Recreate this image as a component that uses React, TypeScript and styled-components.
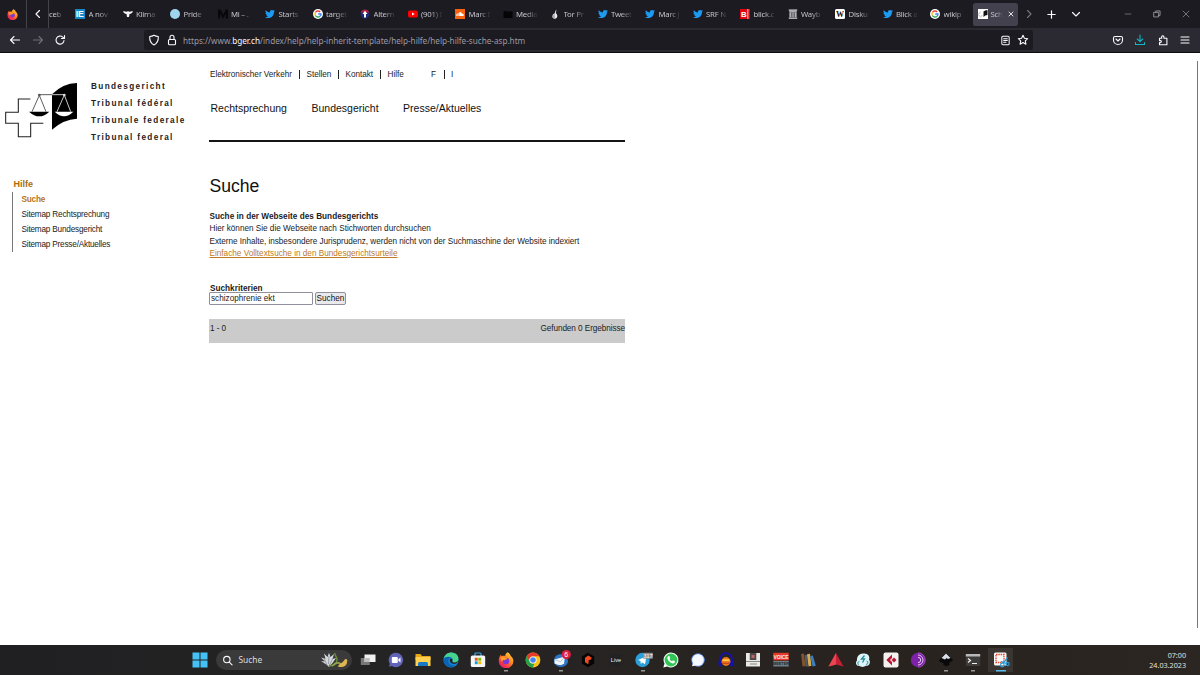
import React from "react";
import styled, { createGlobalStyle, css } from "styled-components";
import { FaTwitter } from "react-icons/fa";

const GlobalStyle = createGlobalStyle`
  * { box-sizing: border-box; }
  body { margin: 0; background: #fff; overflow: hidden; }
`;

const ui = `"Noto Sans", "Open Sans", sans-serif`;
const arial = `"Liberation Sans", Arial, sans-serif`;

const Screen = styled.div`
  width: 1200px;
  height: 675px;
  display: flex;
  flex-direction: column;
  font-family: ${arial};
  background: #fff;
`;

/* ---------- browser chrome ---------- */

const TabBar = styled.div`
  height: 28px;
  flex: none;
  display: flex;
  align-items: center;
  background: #1c1b22;
  color: #fbfbfe;
`;

const BarCell = styled.div<{ $w: number; $line?: boolean }>`
  width: ${(p) => p.$w}px;
  height: 28px;
  flex: none;
  display: flex;
  align-items: center;
  justify-content: center;
  border-right: ${(p) => (p.$line ? "1px solid #44434c" : "none")};
`;

const Tab = styled.div<{ $active?: boolean; $partial?: boolean }>`
  width: ${(p) => (p.$partial ? 20 : p.$active ? 45 : 47.5)}px;
  height: ${(p) => (p.$active ? 23 : 28)}px;
  flex: none;
  display: flex;
  align-items: center;
  gap: ${(p) => (p.$active ? 3 : 3.5)}px;
  padding-left: ${(p) => (p.$partial ? 0 : p.$active ? 5 : 6)}px;
  ${(p) =>
    p.$active &&
    css`
      margin: 0 1.5px 0 1px;
      border-radius: 2.5px;
      background: #42414d;
    `}
`;

const TabTitle = styled.span<{ $w?: number }>`
  width: ${(p) => p.$w ?? 24}px;
  flex: none;
  overflow: hidden;
  white-space: nowrap;
  font: 7.8px/12px ${ui};
  letter-spacing: -.25px;
  color: #c4c3ca;
  mask-image: linear-gradient(to right, #000 40%, transparent 92%);
`;

const NavBar = styled.div`
  height: 25px;
  flex: none;
  display: flex;
  align-items: center;
  background: #2b2a33;
  border-bottom: 1px solid #0c0c0d;
  color: #fbfbfe;
`;

const NavButtons = styled.div`
  width: 144px;
  display: flex;
  align-items: center;
  gap: 10.5px;
  padding-left: 9px;
`;

const UrlBox = styled.div`
  width: 889px;
  height: 20px;
  display: flex;
  align-items: center;
  padding: 0 4px;
  border-radius: 2.5px;
  background: #1c1b22;
`;

const UrlText = styled.div`
  flex: 1;
  padding: 1px 0 0 5.500px;
  white-space: nowrap;
  font: 8.2px/14px ${ui};
  letter-spacing: -.02px;
  color: #9b9aa2;
  b { font-weight: 400; color: #fbfbfe; }
`;

const UrlIcons = styled.div<{ $gap: number }>`
  display: flex;
  align-items: center;
  gap: ${(p) => p.$gap}px;
`;

const Tools = styled.div`
  flex: 1;
  display: flex;
  align-items: center;
  justify-content: flex-end;
  gap: 10.5px;
  padding-right: 9px;
`;

/* ---------- web page ---------- */

const Page = styled.div`
  flex: 1;
  display: flex;
  background: #fff;
  color: #1c1c1c;
`;

const Side = styled.aside`
  width: 209px;
  flex: none;
`;

const Brand = styled.div`
  height: 117px;
  display: flex;
  padding: 25px 0 0 4px;
`;

const LogoBox = styled.div`
  padding-top: 4px;
`;

const CourtNames = styled.div`
  padding-left: 13px;
  font: bold 8.2px/17px ${arial};
  letter-spacing: 1.36px;
  white-space: nowrap;
  color: #222;
`;

const SideTitle = styled.div`
  padding: 7px 0 0 13.5px;
  font: bold 9px/14px ${arial};
  color: #ad6a0e;
`;

const SideList = styled.ul`
  margin: 1px 0 0 12px;
  padding: 0 0 0 8.5px;
  list-style: none;
  border-left: 1px solid #777;
`;

const SideItem = styled.li<{ $current?: boolean }>`
  font: ${(p) => (p.$current ? "bold" : "normal")} 8.2px/15px ${arial};
  letter-spacing: -.19px;
  color: ${(p) => (p.$current ? "#b8741a" : "#222")};
  white-space: nowrap;
`;

const Content = styled.main`
  width: 416px;
  flex: none;
`;

const MetaNav = styled.nav`
  display: flex;
  align-items: center;
  height: 26px;
  padding: 17px 0 0 1px;
  white-space: nowrap;
`;

const MetaLink = styled.span<{ $w: number; $line?: boolean }>`
  width: ${(p) => p.$w}px;
  height: 9px;
  flex: none;
  font: 8.2px/10px ${arial};
  letter-spacing: -.02px;
  border-right: ${(p) => (p.$line ? "1px solid #222" : "none")};
`;

const MetaGap = styled.span`
  width: 6.5px;
  flex: none;
`;

const MainNav = styled.nav`
  display: flex;
  gap: 24.5px;
  height: 63px;
  padding: 21px 0 0 1.5px;
  font: 10.5px/16px ${arial};
  white-space: nowrap;
  color: #111;
  border-bottom: 2px solid #151515;
`;

const Title = styled.h1`
  margin: 32px 0 0 .5px;
  font: 17.6px/24px ${arial};
  color: #111;
`;

const Text = styled.div`
  margin-top: 12.500px;
  padding-left: .5px;
  font: 8.2px/12.5px ${arial};
  white-space: nowrap;
`;

const Line = styled.div<{ $track?: number }>`
  letter-spacing: ${(p) => p.$track ?? 0}px;
`;

const Link = styled.a`
  color: #c07a22;
  text-decoration: underline;
`;

const Label = styled.label`
  display: block;
  margin-top: 24.500px;
  padding-left: 1px;
  font: bold 8.2px/7px ${arial};
  letter-spacing: .02px;
`;

const FormRow = styled.div`
  display: flex;
  gap: 2px;
  height: 13px;
`;

const Input = styled.div`
  width: 104px;
  padding-left: 1px;
  border: 1px solid #8f8f9d;
  border-radius: 1px;
  font: 8.2px/11px ${arial};
`;

const Button = styled.button`
  width: 31px;
  padding: 0;
  border: 1px solid #8f8f9d;
  border-radius: 2px;
  background: #e9e9ed;
  color: #111;
  font: 8.2px/10px ${arial};
`;

const Result = styled.div`
  display: flex;
  justify-content: space-between;
  height: 24px;
  margin-top: 14px;
  padding: 4px 0 0 1px;
  background: #cbcbcb;
  font: 8.2px/12px ${arial};
  letter-spacing: -.07px;
`;

const Scroll = styled.div`
  width: 1px;
  height: 567px;
  margin: 8px 2px 0 auto;
  background: #777;
`;

/* ---------- taskbar ---------- */

const Taskbar = styled.footer`
  height: 30px;
  flex: none;
  display: flex;
  align-items: center;
  padding-left: 186px;
  background: linear-gradient(to right, #202022, #252424 35%, #29231f 75%, #2b2622);
  color: #e6e6e6;
`;

const AppCell = styled.div<{ $running?: boolean; $active?: boolean }>`
  width: 27.5px;
  height: 30px;
  flex: none;
  display: flex;
  justify-content: center;
  padding-top: 7px;
  background:
    ${(p) =>
      p.$active
        ? "linear-gradient(#55bce8, #55bce8) 50% 25px / 10px 1.5px no-repeat, linear-gradient(#3a3531, #3a3531) 50% 3px / 25px 24px no-repeat"
        : p.$running
        ? "linear-gradient(#9a9896, #9a9896) 50% 25px / 4px 1.5px no-repeat"
        : "none"};
`;

const SearchPill = styled.div`
  width: 136px;
  height: 20px;
  flex: none;
  display: flex;
  align-items: center;
  margin: 0 2.5px;
  padding: 0 3px 0 6px;
  border-radius: 10px;
  background: #3a3a3b;
  font: 8.4px/14px ${ui};
  svg { flex: none; }
`;

const SearchText = styled.span`
  flex: 1;
  padding-left: 5.500px;
  color: #dcdcdc;
`;

const Clock = styled.div`
  margin-left: auto;
  padding-right: 14px;
  text-align: right;
  font: 7.2px/10px ${ui};
  color: #e3e1df;
`;

/* ---------- icons ---------- */

const Stroke = ({ d, s = 12, c = "#fbfbfe", w = 1.1, children }: { d?: string; s?: number; c?: string; w?: number; children?: React.ReactNode }) => (
  <svg width={s} height={s} viewBox="0 0 12 12" fill="none" stroke={c} strokeWidth={w} strokeLinecap="round" strokeLinejoin="round">
    {d && <path d={d} />}
    {children}
  </svg>
);

const Firefox = ({ s }: { s: number }) => (
  <svg width={s} height={s} viewBox="0 0 16 16">
    <defs>
      <linearGradient id="fx" x1="1" y1="0" x2="0.2" y2="1">
        <stop offset="0" stopColor="#ffe14a" />
        <stop offset=".45" stopColor="#ff8a1f" />
        <stop offset=".8" stopColor="#f5304c" />
        <stop offset="1" stopColor="#d5228a" />
      </linearGradient>
    </defs>
    <path d="M9.6.3c2.4 1.3 2.6 2.7 3.2 3.6.9.5 2.6 2.5 2.6 5A7.3 7.3 0 0 1 .7 9C.6 6.300 1.600 4.200 3 2.600c0 .8.3 1.400.6 1.700C5 3.600 6.300 3.800 7.200 4 7.200 2.500 8 1.100 9.600.3Z" fill="url(#fx)" />
    <circle cx="8" cy="9" r="3.3" fill="#7a3ad8" />
    <path d="M2.600 5.200c2-.7 3.600-.4 4.700.8 1.500-.1 2 .3 2 .8-.8.7-2.200.6-2.500 1.500C5.200 7.400 4 8 4.700 9.800 3 9 2.200 7 2.600 5.200Z" fill="#ff9a26" />
  </svg>
);

const Google = () => (
  <>
    <circle cx="5" cy="5" r="5" fill="#fff" />
    <g fill="none" strokeWidth="1.400">
      <path d="M7.200 3A3 3 0 0 0 2.400 3.500" stroke="#ea4335" />
      <path d="M2.400 3.500a3 3 0 0 0 0 3" stroke="#fbbc05" />
      <path d="M2.400 6.500A3 3 0 0 0 7 7.200" stroke="#34a853" />
      <path d="M7 7.200A3 3 0 0 0 8 5H5.200" stroke="#4285f4" />
    </g>
  </>
);

const GlyphText = ({ x, y, size, fill, children, family = "Liberation Sans", weight = "bold" }: any) => (
  <text x={x} y={y} fontSize={size} fill={fill} textAnchor="middle" fontFamily={family} fontWeight={weight}>{children}</text>
);

const favicons: Record<string, React.ReactNode> = {
  ie: (<><rect width="10" height="10" fill="#1688ca" /><GlyphText x={4.800} y={8.300} size={8.800} fill="#fff">IE</GlyphText></>),
  klima: <path d="M0 2.500c1.500-.5 2.500 0 3.500.5L4 2l1 .7L6 2l.5 1c1-.5 2-1 3.500-.5C9.300 3.800 8 4.800 6.500 5L6 8H4l-.5-3C2 4.800.7 3.800 0 2.500Z" fill="#f4f4f4" />,
  pride: <circle cx="5" cy="5" r="5" fill="#9fd4ee" />,
  medium: <path d="M0 .5h2.600L5.200 6 7.800.5H10v9H7.600v-5L5.300 9.500H4.700L2 4.500v5H0Z" fill="#08080a" />,
  google: <Google />,
  altern: (<><circle cx="5" cy="5" r="4.500" fill="#1b2a78" /><path d="M.8 3.500A4.500 4.500 0 0 1 9.200 3.500Z" fill="#b21f3c" /><path d="M5 1.800 7.500 5H6v3.500H4V5H2.500Z" fill="#fff" /></>),
  youtube: (<><rect y="1.500" width="10" height="7" rx="1.800" fill="#f00" /><path d="M4 3.400 6.700 5 4 6.600Z" fill="#fff" /></>),
  sound: (<><rect width="10" height="10" fill="#f9630f" /><path d="M1.500 5v2M2.500 4.300v2.700M3.500 4v3" stroke="#fff" strokeWidth=".6" /><path d="M4.200 7V3.500C5.500 2.700 6.900 3.500 7 4.700c1-.2 1.800.4 1.800 1.200S8.300 7 7.700 7Z" fill="#fff" /></>),
  black: <path d="M.5 2.500 1.500 1.500 2.500 2.500H9.500v6.500H.5Z" fill="#050507" />,
  tor: (<><path d="M4.500 4.500C5.500 3 5 2 6.500.3 6 2 6.500 2.500 5.800 4.200 8 5.500 8 9.700 4.800 9.700S1.500 5.700 4.500 4.500Z" fill="#e9e9e9" /><path d="M4.800 5v4.500C2.200 9.500 2.200 6 4.800 5Z" fill="#aaa" /></>),
  blick: (<><rect width="10" height="10" fill="#e20613" /><path d="M7.800 0v10" stroke="#fff" strokeWidth=".8" /><GlyphText x={3.800} y={7.900} size={7.800} fill="#fff">B</GlyphText></>),
  wayback: <path d="M.8.5h8.400v1.200H.8ZM1.300 2.300h7.400v.9H1.300ZM1.500 3.500h1.300V8H1.500ZM3.600 3.500h1V8h-1ZM5.400 3.500h1V8h-1ZM7.200 3.500h1.300V8H7.200ZM.8 8.500h8.400v1.300H.8Z" fill="#d9d9dc" />,
  wiki: (<><rect width="10" height="10" rx="1.500" fill="#fff" /><GlyphText x={5} y={7.900} size={8} fill="#111" family="Liberation Serif">W</GlyphText></>),
  bger: (<><rect width="10" height="10" fill="#fff" /><path d="M5.500 2.500Q7 1 9.500 1v5Q7 6.200 5.500 8Z" fill="#111" /><path d="M3 3H1.800v1.500H.6v2h1.200V8h1.600V6.500h1.200" fill="none" stroke="#aaa" strokeWidth=".5" /></>),
};

const Favicon = ({ name }: { name: string }) =>
  name === "twitter" ? (
    <FaTwitter size={10} color="#1d9bf0" style={{ flex: "none" }} />
  ) : (
    <svg width="10" height="10" viewBox="0 0 10 10" style={{ flex: "none" }}>{favicons[name]}</svg>
  );

const tabs: [string, string][] = [
  ["ie", "A nov"], ["klima", "Klima"], ["pride", "Pride"], ["medium", "Mi – ."], ["twitter", "Starts"],
  ["google", "target"], ["altern", "Altern"], ["youtube", "(901) I"], ["sound", "Marc I"], ["black", "Media"],
  ["tor", "Tor Pr"], ["twitter", "Tweet"], ["twitter", "Marc J"], ["twitter", "SRF N"], ["blick", "blick.c"],
  ["wayback", "Wayb"], ["wiki", "Disku"], ["twitter", "Blick a"], ["google", "wikip"],
];

const apps: { icon: React.ReactNode; running?: boolean; active?: boolean }[] = [
  { icon: (<><path d="M.8 6h9v7h-9Z" fill="#77777a" /><path d="M4.500 2.500h11v7.500h-11Z" fill="#f2f2f2" /><path d="M4.500 6h5.300v4H4.500Z" fill="#bdbdbd" /></>) },
  { icon: (<><path d="M8 .8a7.200 7.200 0 1 1-4 13.200L1 14.800l.8-3A7.200 7.200 0 0 1 8 .8Z" fill="#6264b8" /><rect x="3.800" y="5" width="6" height="6" rx="1" fill="#fff" /><path d="m10.300 7.200 2.200-1.700v5l-2.200-1.700Z" fill="#fff" /></>) },
  { icon: (<><path d="M.5 2h5l1.500 2h8.500v4H.5Z" fill="#e9a515" /><path d="M.5 5h15v9H.5Z" fill="#ffd04f" /><path d="M3 11.500q0-1.500 1.500-1.500h7q1.500 0 1.500 1.500V14H3Z" fill="#1879c9" /></>) },
  { icon: (<><circle cx="8" cy="8" r="7.500" fill="#1583d3" /><path d="M.6 7C1.500 2.500 5 .5 8.500.5c4 0 7 2.900 7 6.200 0 2.300-1.700 3.800-3.900 3.800-1.600 0-2.600-.7-2.300-1.500.9-1.500.1-3.900-2.600-3.900C4 5.100 1.500 6 .6 7Z" fill="#46d48c" /><path d="M.6 7C2 4.500 6 4 8 5.500c-2 .3-2.900 2-2.700 4C5.600 12.500 8.500 14 12.500 13.500 7 17.500-.5 13.500.6 7Z" fill="#0b63b5" /><path d="M6.800 8.600c0-1.900 1.200-2.400 2-1.800.9.800.9 1.500.5 2.200-.3.800.7 1.500 2.300 1.500 1.400 0 2.500-.6 3.200-1.500-.5 2-1.700 3-3.600 3-2.600 0-4.400-1.600-4.400-3.400Z" fill="#252424" /></>) },
  { icon: (<><path d="M5 4V2q0-1 1-1h4q1 0 1 1v2" fill="none" stroke="#32a8e8" strokeWidth="1.200" /><rect x=".8" y="3.500" width="14.400" height="11.500" rx="1.500" fill="#f3f5f7" /><path d="M4.800 5.800h2.900v2.900H4.800Z" fill="#f25022" /><path d="M8.300 5.800h2.900v2.900H8.300Z" fill="#7fba00" /><path d="M4.800 9.300h2.900v2.900H4.800Z" fill="#00a4ef" /><path d="M8.300 9.300h2.900v2.900H8.300Z" fill="#ffb900" /></>) },
  { icon: <Firefox s={16} />, running: true },
  { icon: (<><circle cx="8" cy="8" r="7.400" fill="#fbc116" /><path d="M1.600 4.300A7.400 7.400 0 0 1 14.400 4.300H8A3.700 3.700 0 0 0 4.800 9.800Z" fill="#e33b2e" /><path d="M1.600 4.300 4.800 9.800A3.700 3.700 0 0 0 9.500 11.400L7.500 15.400A7.400 7.400 0 0 1 1.600 4.300Z" fill="#23a04c" /><circle cx="8" cy="8" r="3.600" fill="#fff" /><circle cx="8" cy="8" r="2.800" fill="#4285f4" /></>) },
  { icon: (<><path d="M1 9C1 4 5 1.500 10 2.500L15 8c.5 4-3 7-7 7s-7-2.500-7-6Z" fill="#2d74c4" /><path d="M1.500 7.500 12 4.500l-1 7.300C7.500 14 4.500 13 1.500 11.500Z" fill="#f3f7fb" /><path d="m1.500 7.500 6 2.300L12 4.500" fill="none" stroke="#9ab9d8" strokeWidth=".7" /><circle cx="13.300" cy="2.600" r="4.600" fill="#dc1f3e" /><GlyphText x={13.300} y={5.100} size={7} fill="#fff" weight="normal">6</GlyphText></>), running: true },
  { icon: (<><path d="M8 .8 14.200 4.400v7.200L8 15.200 1.800 11.600V4.400Z" fill="#050505" /><path d="M5 5.800 8.300 3.600l3.200 1.900-.2 2-2.500.4-.5 4.300L5 10.300Z" fill="#ee4b23" /></>) },
  { icon: (<><rect x="2" y="2" width="12" height="12" fill="#222" /><GlyphText x={8} y={10.400} size={5.600} fill="#eee" weight="normal">Live</GlyphText></>) },
  { icon: (<><circle cx="7.500" cy="8" r="7.200" fill="#2a9fda" /><path d="m3 8 8.500-3.700-1.500 8-2.700-1.900-1.500 1.500-.3-2.800Z" fill="#fff" /><rect x="8" y=".8" width="10" height="6" rx="1" fill="#8c8c8c" /><GlyphText x={13} y={5.700} size={5.500} fill="#fff" weight="normal">317</GlyphText></>), running: true },
  { icon: (<><path d="M8 .4A7.500 7.500 0 1 1 4.300 14.400L.3 15.600l1.200-4A7.500 7.500 0 0 1 8 .4Z" fill="#f5fff7" /><circle cx="8" cy="8" r="6.400" fill="#32c456" /><path d="M5 4.300 6.300 4l.9 2-.6.9c.5 1.100 1.300 1.800 2.500 2.300l.9-.9 1.900.9c.1 1.600-1 2.300-2.200 2.200C6.700 11 4.200 7.500 4.300 5.800Z" fill="#fff" /></>) },
  { icon: (<><circle cx="8" cy="8" r="6.300" fill="#f6f8ff" stroke="#4c80e8" strokeWidth="1" strokeDasharray="2.500 .5" /><path d="M2 14.200 3 10.500 6 13.500Z" fill="#f6f8ff" /></>) },
  { icon: (<><path d="M2 10C1.500 3.500 5 1.200 8 1.200S14.500 3.500 14 10" fill="none" stroke="#1414ad" strokeWidth="1.800" /><rect x=".5" y="7.500" width="3.500" height="7" rx="1.700" fill="#1212ae" /><rect x="12" y="7.500" width="3.500" height="7" rx="1.700" fill="#1212ae" /><ellipse cx="8" cy="9.500" rx="4.500" ry="4.400" fill="#ee7621" /><path d="M4.500 8.200h7" stroke="#ffd33c" strokeWidth="1.600" /><path d="M4 11.300h8" stroke="#b5401b" /></>) },
  { icon: (<><rect x="1" y="1" width="14" height="13.500" fill="#e8e8e5" /><rect x="4.800" y="1" width="6.500" height="7" fill="#4f4748" /><rect x="6.500" y="3" width="3" height="3" fill="#b66" /><path d="M1 9.500h14M5 12h7" stroke="#888" /></>) },
  { icon: (<><rect x=".3" y=".8" width="15.400" height="7.600" fill="#e6392c" /><rect x=".3" y="9" width="15.400" height="5.500" fill="#6f7f88" /><GlyphText x={8} y={6.500} size={4.900} fill="#ffe9e4">VOICE</GlyphText><GlyphText x={8} y={13.400} size={3.800} fill="#20262b">MEETER</GlyphText></>) },
  { icon: (<><path d="m1 2 3-.5L5.500 14 2.500 14.500Z" fill="#7d542c" /><path d="M4.700 3h2.200l1 11.500H5.500Z" fill="#525c66" /><path d="m7 2.200 3-.5 1.500 12-3 .7Z" fill="#d6ab55" /><path d="m10.200 4 2.600-.5 3 10.300-3.200.8Z" fill="#3d80bc" /></>) },
  { icon: (<><path d="M8 1 15.500 14.500 8 12.500.5 14.500Z" fill="#c51f33" /><path d="M8 1v11.500L.5 14.500Z" fill="#e84650" /></>) },
  { icon: (<><path d="M4 13.800C.8 14 .2 10 2 8.500 1.500 4 5 1 8.500 1.500 12 .8 15.500 4 14 7.500c2 3 .5 6.500-3 6.300-2 1.500-5 1.500-7 0Z" fill="#dff4f7" /><path d="M4 12.500C2 12 2.500 9.500 4.500 9.500M11 12.500c2.500-.3 2.500-3 .5-3.500" fill="none" stroke="#3ba3b4" strokeWidth="1.100" /><path d="M9.500 3.500 6.500 7h3L7.500 10.500" fill="none" stroke="#248b9b" strokeWidth="1.300" /></>) },
  { icon: (<><rect x=".5" y=".5" width="15" height="15" rx="2" fill="#f4f1f0" /><path d="M9 2.500 3.300 8 9 13.500V10L7 8l2-2Z" fill="#b71732" /><path d="m11 5.500 2.500 2.500L11 10.500 8.500 8Z" fill="#b71732" /></>) },
  { icon: (<><circle cx="8" cy="8" r="7.200" fill="#7e22a8" /><path d="M8 3a5 5 0 0 1 0 10M8 5.300a2.700 2.700 0 0 1 0 5.400" fill="none" stroke="#e8c8f5" strokeWidth="1" /><path d="M8 .8a7.200 7.200 0 0 1 0 14.400" fill="none" stroke="#b35bd6" strokeWidth=".8" /></>) },
  { icon: (<><path d="M8 1 14.500 7.500q1 1.300-1.500 2L11 11l1 1.500L8 14.500 5 12.500l1-1L2.500 10Q.5 8.500 1.500 7.500Z" fill="#0a0a0a" /><path d="m8 1.500 4.500 4.500-2.500 1-1.500-1-1.500 1.500-3.500-1.500Z" fill="#d9dfe8" /></>), running: true },
  { icon: (<><rect x=".8" y="2" width="14.400" height="12" rx="1" fill="#3d3c3b" /><path d="M.8 2h14.400v2.500H.8Z" fill="#b8b8b8" /><path d="m3 6.500 2.500 2L3 10.500M7 11.500h5" fill="none" stroke="#f0f0f0" strokeWidth="1.200" /></>), running: true },
  { icon: (<><rect x="1" y=".5" width="12.500" height="13" rx="1.500" fill="#fafafa" /><rect x="3" y="2.500" width="8" height="8" fill="none" stroke="#e5492c" strokeWidth="1.400" strokeDasharray="1.500 .8" /><path d="m14.500 5.500-4.300 6M8 9.500l6 2.200" stroke="#299edb" strokeWidth="1.300" /><circle cx="9.300" cy="13" r="1.800" fill="none" stroke="#299edb" strokeWidth="1.200" /><circle cx="14.600" cy="12" r="1.600" fill="none" stroke="#299edb" strokeWidth="1.100" /></>), running: true, active: true },
];

const AppIcon = ({ children }: { children: React.ReactNode }) => (
  <svg width="16" height="16" viewBox="0 0 16 16" overflow="visible">{children}</svg>
);

const CourtLogo = () => (
  <svg width="74" height="58" viewBox="12 66 222 174" fill="none">
    <path d="M91 117H55v40H17v33h38v40h37v-40h38" stroke="#222" strokeWidth="3.200" />
    <path d="M156 103Q188 70 231 69V176Q190 178 156 209Z" fill="#000" />
    <path d="M117 104h39M118 106 96 155M118 106l20 49" stroke="#444" strokeWidth="2.600" />
    <path d="M156 104h37M193 105l-22 50M193 105l19 50" stroke="#e8e8e8" strokeWidth="2.600" />
    <circle cx="118" cy="105" r="4" fill="#555" />
    <circle cx="193" cy="105" r="4" fill="#ddd" />
    <path d="M87 155h61Q118 183 87 155Z" fill="#000" />
    <path d="M164 155h56Q192 182 164 155Z" fill="#fff" />
  </svg>
);

export default function App() {
  return (
    <Screen>
      <GlobalStyle />
      <TabBar>
        <BarCell $w={25}><Firefox s={11} /></BarCell>
        <BarCell $w={2} $line />
        <BarCell $w={22} $line><Stroke d="M7.500 2.500 4 6l3.500 3.500" /></BarCell>
        <Tab $partial><TabTitle $w={16}>ceb</TabTitle></Tab>
        {tabs.map(([icon, title], i) => (
          <Tab key={i}>
            <Favicon name={icon} />
            <TabTitle>{title}</TabTitle>
          </Tab>
        ))}
        <Tab $active>
          <Favicon name="bger" />
          <TabTitle $w={13}>Sch</TabTitle>
          <Stroke s={8} d="M3 3l6 6M9 3 3 9" w={1.300} />
        </Tab>
        <BarCell $w={19}><Stroke d="M4.500 2.500 8 6 4.500 9.500" c="#77767d" /></BarCell>
        <BarCell $w={26}><Stroke s={11} d="M6 2v8M2 6h8" w={1.300} /></BarCell>
        <BarCell $w={24}><Stroke d="M2.500 4.500 6 8l3.500-3.500" /></BarCell>
        <BarCell $w={26} />
        <BarCell $w={28}><Stroke s={10} d="M2.500 6h7" c="#777680" w={1} /></BarCell>
        <BarCell $w={30}>
          <Stroke s={10} c="#a09fa6" w={1}><rect x="2.500" y="4" width="5.500" height="5.500" /><path d="M4.500 4V2.300h5.200v5.400H8" /></Stroke>
        </BarCell>
        <BarCell $w={27}><Stroke s={10} d="M2.500 2.500l7 7M9.500 2.500l-7 7" c="#85848c" w={1} /></BarCell>
      </TabBar>
      <NavBar>
        <NavButtons>
          <Stroke d="M10.500 6h-9M5 2.500 1.500 6 5 9.500" />
          <Stroke d="M1.500 6h9M7 2.500 10.500 6 7 9.500" c="#706f78" />
          <Stroke><path d="M10 6.500A4 4 0 1 1 8.800 3.200L10.300 4.500" /><path d="M10.500 1.500v3h-3" /></Stroke>
        </NavButtons>
        <UrlBox>
          <UrlIcons $gap={5.500}>
            <Stroke d="M6 1.300C7.500 2.300 9 2.500 10.300 2.500 10.500 6.500 9 9.500 6 10.900 3 9.500 1.500 6.500 1.700 2.500 3 2.500 4.500 2.300 6 1.300Z" />
            <Stroke><rect x="2.500" y="5.500" width="7" height="5.200" rx="1" /><path d="M4 5.500V3.200a2 2 0 0 1 4 0V5.500" /></Stroke>
          </UrlIcons>
          <UrlText>https://www.<b>bger.ch</b>/index/help/help-inherit-template/help-hilfe/help-hilfe-suche-asp.htm</UrlText>
          <UrlIcons $gap={6}>
            <Stroke s={11}><rect x="2" y="1.300" width="8" height="9.400" rx="1.200" /><path d="M4 4h4M4 6h4M4 8h2.500" /></Stroke>
            <Stroke d="M6 1.300 7.400 4.300l3.300.4-2.400 2.200.6 3.300L6 8.600l-2.900 1.600.6-3.300L1.300 4.700l3.300-.4Z" />
          </UrlIcons>
        </UrlBox>
        <Tools>
          <Stroke><path d="M3 2.500h6q1.500 0 1.500 1.500v2a4.500 4.500 0 0 1-9 0V4Q1.500 2.500 3 2.500Z" /><path d="M4 5 6 7l2-2" /></Stroke>
          <Stroke c="#12b5c4" d="M6 1v6.500M3.300 5 6 7.700 8.700 5M1.500 8.500v2h9v-2" />
          <Stroke d="M2.500 4.200h2.200c-.8-3.200 2.800-3.200 2.200 0h3v6.500h-7.400V8.500c2.500.6 2.500-2.400 0-1.800Z" />
          <Stroke d="M2 3h8M2 6h8M2 9h8" />
        </Tools>
      </NavBar>
      <Page>
        <Side>
          <Brand>
            <LogoBox><CourtLogo /></LogoBox>
            <CourtNames>
              <div>Bundesgericht</div>
              <div>Tribunal fédéral</div>
              <div>Tribunale federale</div>
              <div>Tribunal federal</div>
            </CourtNames>
          </Brand>
          <SideTitle>Hilfe</SideTitle>
          <SideList>
            <SideItem $current>Suche</SideItem>
            <SideItem>Sitemap Rechtsprechung</SideItem>
            <SideItem>Sitemap Bundesgericht</SideItem>
            <SideItem>Sitemap Presse/Aktuelles</SideItem>
          </SideList>
        </Side>
        <Content>
          <MetaNav>
            <MetaLink $w={90} $line>Elektronischer Verkehr</MetaLink>
            <MetaGap />
            <MetaLink $w={32.500} $line>Stellen</MetaLink>
            <MetaGap />
            <MetaLink $w={35.500} $line>Kontakt</MetaLink>
            <MetaGap />
            <MetaLink $w={43.500}>Hilfe</MetaLink>
            <MetaLink $w={13.500} $line>F</MetaLink>
            <MetaGap />
            <MetaLink $w={6}>I</MetaLink>
          </MetaNav>
          <MainNav>
            <span>Rechtsprechung</span>
            <span>Bundesgericht</span>
            <span>Presse/Aktuelles</span>
          </MainNav>
          <Title>Suche</Title>
          <Text>
            <Line $track={0.030}><b>Suche in der Webseite des Bundesgerichts</b></Line>
            <Line $track={-0.010}>Hier können Sie die Webseite nach Stichworten durchsuchen</Line>
            <Line $track={-0.038}>Externe Inhalte, insbesondere Jurisprudenz, werden nicht von der Suchmaschine der Website indexiert</Line>
            <Line><Link>Einfache Volltextsuche in den Bundesgerichtsurteile</Link></Line>
          </Text>
          <Label>Suchkriterien</Label>
          <FormRow>
            <Input>schizophrenie ekt</Input>
            <Button>Suchen</Button>
          </FormRow>
          <Result><span>1 - 0</span><span>Gefunden 0 Ergebnisse</span></Result>
        </Content>
        <Scroll />
      </Page>
      <Taskbar>
        <AppCell>
          <AppIcon>
            <path d="M.5.500h7v7h-7ZM8.500.500h7v7h-7ZM.5 8.500h7v7h-7ZM8.500 8.500h7v7h-7Z" fill="#45c2f5" />
          </AppIcon>
        </AppCell>
        <SearchPill>
          <Stroke s={11} w={1.200}><circle cx="5.300" cy="5" r="3.500" /><path d="m8 7.700 3 3" /></Stroke>
          <SearchText>Suche</SearchText>
          <svg width="29" height="16" viewBox="0 0 29 16">
            <path d="M7 13 1 9l4 .5L1 5.500l4.500 1.300L4 1.500 7.500 5 9 .8 10.500 5 14 2l-1.500 5L16 6l-3.500 5L9 15Z" fill="#d5d8dc" />
            <path d="M7 13 4 6M8.500 12 9 4M10 12l3-6" stroke="#70757c" strokeWidth=".6" />
            <path d="M9 13c4 2 8-1 8-5s-3-5-2-7" fill="none" stroke="#6b8738" strokeWidth="1.500" />
            <path d="M12 14q5-5 9-2" fill="none" stroke="#93a546" strokeWidth="1.500" />
            <path d="M18 14.500c1-3 4-3 6-6 2-2.500 4-1.500 3 2-1 5-6 5-9 4Z" fill="#e0b450" />
          </svg>
        </SearchPill>
        {apps.map((a, i) => (
          <AppCell key={i} $running={a.running} $active={a.active}><AppIcon>{a.icon}</AppIcon></AppCell>
        ))}
        <Clock>07:00<br />24.03.2023</Clock>
      </Taskbar>
    </Screen>
  );
}
